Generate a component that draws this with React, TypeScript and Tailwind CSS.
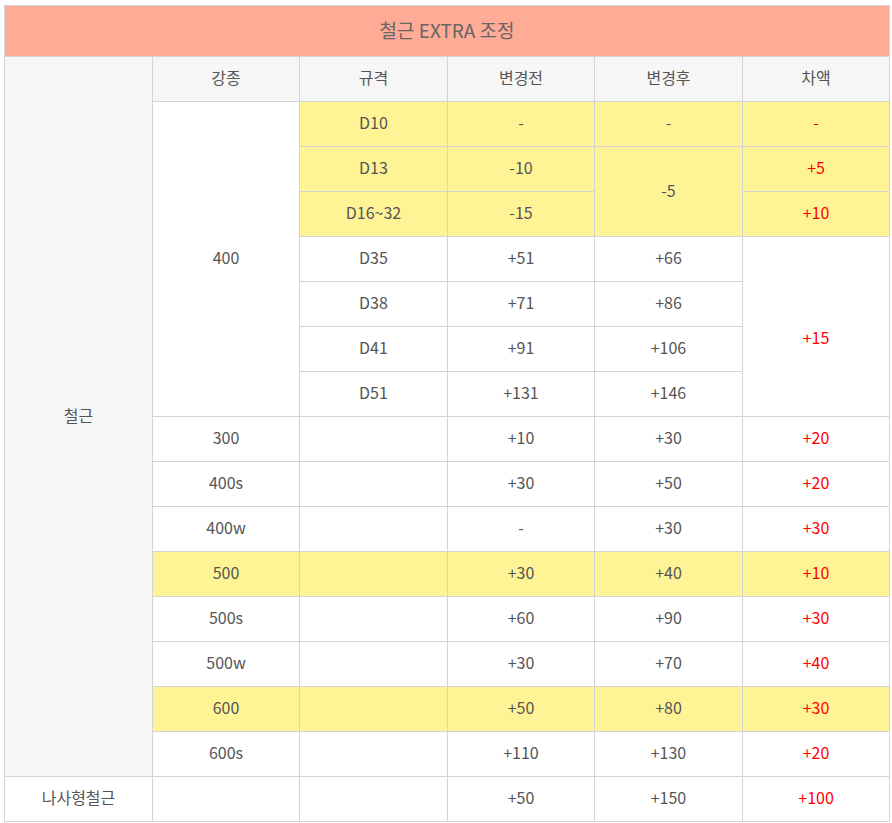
import React from 'react';

type Cell = {
  text?: string;
  rowSpan?: number;
  yellow?: boolean;
  red?: boolean;
  extra?: string;
};

const rows: Cell[][] = [
  [
    { text: '400', rowSpan: 7 },
    { text: 'D10', yellow: true },
    { text: '-', yellow: true },
    { text: '-', yellow: true },
    { text: '-', yellow: true, red: true },
  ],
  [
    { text: 'D13', yellow: true },
    { text: '-10', yellow: true },
    { text: '-5', yellow: true, rowSpan: 2 },
    { text: '+5', yellow: true, red: true },
  ],
  [
    { text: 'D16~32', yellow: true },
    { text: '-15', yellow: true },
    { text: '+10', yellow: true, red: true },
  ],
  [{ text: 'D35' }, { text: '+51' }, { text: '+66' }, { text: '+15', red: true, rowSpan: 4, extra: 'pt-[24px]' }],
  [{ text: 'D38' }, { text: '+71' }, { text: '+86' }],
  [{ text: 'D41' }, { text: '+91' }, { text: '+106' }],
  [{ text: 'D51' }, { text: '+131' }, { text: '+146' }],
  [{ text: '300' }, {}, { text: '+10' }, { text: '+30' }, { text: '+20', red: true }],
  [{ text: '400s' }, {}, { text: '+30' }, { text: '+50' }, { text: '+20', red: true }],
  [{ text: '400w' }, {}, { text: '-' }, { text: '+30' }, { text: '+30', red: true }],
  [
    { text: '500', yellow: true },
    { yellow: true },
    { text: '+30', yellow: true },
    { text: '+40', yellow: true },
    { text: '+10', red: true, yellow: true },
  ],
  [{ text: '500s' }, {}, { text: '+60' }, { text: '+90' }, { text: '+30', red: true }],
  [{ text: '500w' }, {}, { text: '+30' }, { text: '+70' }, { text: '+40', red: true }],
  [
    { text: '600', yellow: true },
    { yellow: true },
    { text: '+50', yellow: true },
    { text: '+80', yellow: true },
    { text: '+30', red: true, yellow: true },
  ],
  [{ text: '600s' }, {}, { text: '+110' }, { text: '+130' }, { text: '+20', red: true }],
];

// bottom padding lifts the Noto CJK text a touch, matching the original
const td = 'border border-[#d4d4d4] h-[45px] px-0 pt-0 pb-[4px] text-center align-middle leading-[20px]';

function DataCell({ c }: { c: Cell }) {
  const bg = c.yellow ? 'bg-[#fff495]' : 'bg-white';
  const color = c.red ? 'text-[#ff0000]' : 'text-[#555555]';
  return (
    <td rowSpan={c.rowSpan} className={`${td} ${bg} ${color} ${c.extra ?? ''}`}>
      {c.text}
    </td>
  );
}

export default function App() {
  return (
    <div className="bg-white pl-[4px] pt-[5px] font-['Noto_Sans_CJK_KR','Noto_Sans',sans-serif]">
      <table className="w-[885px] table-fixed border-collapse text-[16px] text-[#555555]">
        <colgroup>
          <col className="w-[148px]" />
          <col className="w-[147px]" />
          <col className="w-[148px]" />
          <col className="w-[147px]" />
          <col className="w-[148px]" />
          <col className="w-[147px]" />
        </colgroup>
        <tbody>
          <tr>
            <td colSpan={6} className="h-[51px] border border-[#d4d4d4] bg-[#ffab96] px-0 pt-0 pb-[2px] text-center align-middle text-[19px] leading-[24px] text-[#666666]">
              철근 EXTRA 조정
            </td>
          </tr>
          <tr>
            <td rowSpan={16} className={`${td} bg-[#f6f6f6]`}>
              철근
            </td>
            {['강종', '규격', '변경전', '변경후', '차액'].map((h) => (
              <td key={h} className={`${td} bg-[#f6f6f6]`}>
                {h}
              </td>
            ))}
          </tr>
          {rows.map((r, i) => (
            <tr key={i}>
              {r.map((c, j) => (
                <DataCell key={j} c={c} />
              ))}
            </tr>
          ))}
          <tr>
            <td className={`${td} bg-white`}>나사형철근</td>
            <td className={`${td} bg-white`} />
            <td className={`${td} bg-white`} />
            <td className={`${td} bg-white`}>+50</td>
            <td className={`${td} bg-white`}>+150</td>
            <td className={`${td} bg-white text-[#ff0000]`}>+100</td>
          </tr>
        </tbody>
      </table>
    </div>
  );
}
